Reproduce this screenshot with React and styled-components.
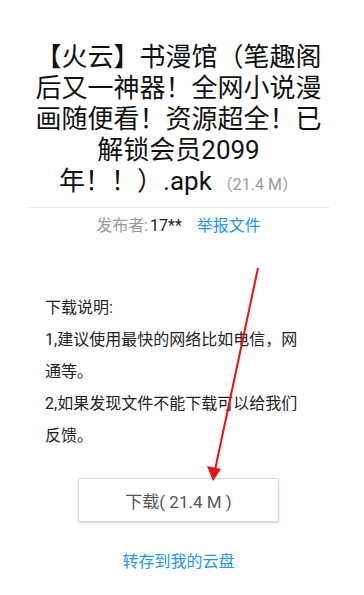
import React from 'react'
import styled, { createGlobalStyle } from 'styled-components'

const GlobalStyle = createGlobalStyle`
  html, body { margin: 0; padding: 0; background: #fff; }
  body { font-family: Roboto, "Noto Sans CJK SC", sans-serif; }
`

const Page = styled.div`
  position: relative;
  width: 364px;
  height: 595px;
  overflow: hidden;
  padding: 42px 7px 0 0;
  box-sizing: border-box;
`

const Title = styled.h1`
  margin: 0;
  padding: 0 30px;
  font-size: 26px;
  line-height: 31px;
  font-weight: 400;
  color: #111;
  text-align: center;
`

const Size = styled.span`
  font-size: 16px;
  color: #9a9a9a;
  margin-left: 5px;
`

const Divider = styled.hr`
  margin: 7px 27px 0;
  border: 0;
  border-top: 1px solid #eee;
`

const Meta = styled.div`
  margin-top: 8px;
  text-align: center;
  font-size: 16px;
  line-height: 20px;
`

const Label = styled.span`
  color: #999;
  margin-right: 2px;
`

const Value = styled.span`
  color: #222;
  margin-right: 15px;
`

const Link = styled.a`
  color: #2196f3;
  text-decoration: none;
  font-size: 16px;
`

const Notes = styled.div`
  margin-top: 56px;
  padding: 0 51px 0 45px;
  font-size: 16px;
  line-height: 32px;
  color: #222;
`

const Note = styled.p`
  margin: 0;
`

const ButtonRow = styled.div`
  display: flex;
  justify-content: center;
  margin-top: 26px;
`

const DownloadButton = styled.button`
  width: 201px;
  height: 44px;
  background: #fff;
  border: 1px solid #d6d6d6;
  border-radius: 2px;
  box-shadow: 0 1px 2px rgba(0, 0, 0, 0.15);
  font-family: inherit;
  font-size: 17px;
  color: #555;
`

const SaveRow = styled.div`
  margin-top: 30px;
  text-align: center;
  line-height: 20px;
`

const Arrow = styled.svg`
  position: absolute;
  left: 0;
  top: 0;
  pointer-events: none;
`

export default function App() {
  return (
    <Page>
      <GlobalStyle />
      <Title>
        【火云】书漫馆（笔趣阁后又一神器！全网小说漫画随便看！资源超全！已解锁会员2099年！！）.apk
        <Size>（21.4 M）</Size>
      </Title>
      <Divider />
      <Meta>
        <Label>发布者:</Label><Value>17**</Value>
        <Link href="#">举报文件</Link>
      </Meta>
      <Notes>
        <Note>下载说明:</Note>
        <Note>1,建议使用最快的网络比如电信，网通等。</Note>
        <Note>2,如果发现文件不能下载可以给我们反馈。</Note>
      </Notes>
      <ButtonRow>
        <DownloadButton>下载( 21.4 M )</DownloadButton>
      </ButtonRow>
      <SaveRow>
        <Link href="#">转存到我的云盘</Link>
      </SaveRow>
      <Arrow width="364" height="595" viewBox="0 0 364 595">
        <line x1="258" y1="268" x2="215" y2="470" stroke="#ee1111" strokeWidth="2" />
        <polygon points="213,481 207,466 221,469" fill="#ee1111" />
      </Arrow>
    </Page>
  )
}
